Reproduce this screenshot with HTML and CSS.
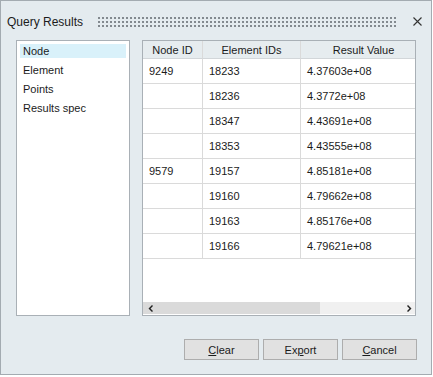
FILE: index.html
```html
<!DOCTYPE html>
<html lang="en">
<head>
  <meta charset="UTF-8">
  <title>Query Results</title>
  <link rel="stylesheet" href="styles.css">
</head>
<body>
  <div class="dialog">
    <div class="titlebar">
      <span class="title">Query Results</span>
      <span class="grip"></span>
      <svg class="close" width="9" height="9" viewBox="0 0 9 9">
        <path d="M0.5 0.5 L8.5 8.5 M8.5 0.5 L0.5 8.5" stroke="#333" stroke-width="1.1" fill="none"/>
      </svg>
    </div>

    <div class="main">
      <ul class="list">
        <li class="item selected">Node</li>
        <li class="item">Element</li>
        <li class="item">Points</li>
        <li class="item">Results spec</li>
      </ul>

      <div class="grid">
        <div class="grid-body">
          <table>
            <thead>
              <tr>
                <th class="c-node">Node ID</th>
                <th class="c-elem">Element IDs</th>
                <th class="c-val">Result Value</th>
              </tr>
            </thead>
            <tbody>
              <tr><td>9249</td><td>18233</td><td>4.37603e+08</td></tr>
              <tr><td></td><td>18236</td><td>4.3772e+08</td></tr>
              <tr><td></td><td>18347</td><td>4.43691e+08</td></tr>
              <tr><td></td><td>18353</td><td>4.43555e+08</td></tr>
              <tr><td>9579</td><td>19157</td><td>4.85181e+08</td></tr>
              <tr><td></td><td>19160</td><td>4.79662e+08</td></tr>
              <tr><td></td><td>19163</td><td>4.85176e+08</td></tr>
              <tr><td></td><td>19166</td><td>4.79621e+08</td></tr>
            </tbody>
          </table>
        </div>
        <div class="hscroll">
          <div class="thumb">
            <svg width="5" height="7" viewBox="0 0 5 7"><polygon points="4,0 5,1 2.5,3.5 5,6 4,7 0.5,3.5" fill="#222"/></svg>
          </div>
          <div class="track"></div>
          <div class="arrow-r">
            <svg width="5" height="7" viewBox="0 0 5 7"><polygon points="1,0 0,1 2.5,3.5 0,6 1,7 4.5,3.5" fill="#222"/></svg>
          </div>
        </div>
      </div>
    </div>

    <div class="buttons">
      <button class="btn"><u>C</u>lear</button>
      <button class="btn">Ex<u>p</u>ort</button>
      <button class="btn"><u>C</u>ancel</button>
    </div>
  </div>
</body>
</html>
```

FILE: styles.css
```css
body {
  margin: 0;
  background: #fff;
  font-family: "Liberation Sans", Arial, sans-serif;
  color: #1b1b1b;
}

.dialog {
  width: 432px;
  height: 375px;
  box-sizing: border-box;
  border: 1px solid #a3abb1;
  background: #e4ebef;
}

.titlebar {
  height: 39px;
  display: flex;
  align-items: center;
  padding: 0 9px 0 6px;
  box-sizing: border-box;
}

.title {
  font-size: 12px;
  padding-top: 2px;
}

.grip {
  flex: 1;
  height: 11px;
  margin: 2px 17px 0 14px;
  background-image: radial-gradient(circle, #7f868c 0.7px, transparent 0.9px);
  background-size: 4px 4px;
  background-position: 0 0;
}

.close {
  margin-top: 2px;
}

.main {
  display: flex;
  gap: 12px;
  padding: 0 15px;
  height: 276px;
}

.list {
  width: 114px;
  margin: 0;
  padding: 3px 3px 0 3px;
  list-style: none;
  box-sizing: border-box;
  background: #fff;
  border: 1px solid #a9b0b6;
  font-size: 11px;
}

.item {
  height: 14px;
  line-height: 14px;
  padding-left: 3px;
  margin-bottom: 5px;
}

.selected {
  background: #d9f1fa;
}

.grid {
  width: 274px;
  box-sizing: border-box;
  border: 1px solid #a9b0b6;
  background: #fff;
  display: flex;
  flex-direction: column;
}

.grid-body {
  flex: 1;
  overflow: hidden;
}

table {
  table-layout: fixed;
  border-collapse: separate;
  border-spacing: 0;
  width: 284px;
  font-size: 11px;
}

th, td {
  box-sizing: border-box;
  border-right: 1px solid #dadada;
  border-bottom: 1px solid #dadada;
  padding: 0 0 0 6px;
  text-align: left;
  font-weight: normal;
  white-space: nowrap;
}

th {
  height: 18px;
  background: #e6ecef;
  text-align: center;
  padding: 0;
  border-bottom-color: #d2d6d9;
}

td {
  height: 25px;
}

.c-node { width: 60px; }
.c-elem { width: 98px; }
.c-val { width: 126px; }

.hscroll {
  height: 12px;
  display: flex;
  margin-bottom: 1px;
}

.thumb {
  width: 177px;
  background: #dadada;
  display: flex;
  align-items: center;
  padding-left: 5px;
  box-sizing: border-box;
}

.track {
  flex: 1;
  background: #f0f0f0;
}

.arrow-r {
  width: 12px;
  background: #f0f0f0;
  display: flex;
  align-items: center;
  justify-content: center;
}

.buttons {
  display: flex;
  justify-content: flex-end;
  gap: 4px;
  padding: 23px 14px 0 0;
}

.btn {
  width: 75px;
  height: 21px;
  border: 1px solid #adadad;
  background: #e1e1e1;
  font-family: "Liberation Sans", Arial, sans-serif;
  font-size: 11px;
  color: #1b1b1b;
  padding: 0;
}
```
